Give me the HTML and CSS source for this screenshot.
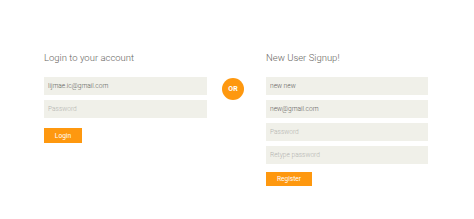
FILE: index.html
```html
<!DOCTYPE html>
<html lang="en">
<head>
  <meta charset="UTF-8">
  <meta name="viewport" content="width=device-width, initial-scale=1.0">
  <title>Login</title>
  <link rel="stylesheet" href="styles.css">
</head>
<body>
  <div class="form-section">
    <!-- Login form -->
    <div class="login-form">
      <h2>Login to your account</h2>
      <input type="text" value="lijmae.ic@gmail.com">
      <input type="password" placeholder="Password">
      <button class="btn-login">Login</button>
    </div>

    <div class="or">OR</div>

    <!-- Signup form -->
    <div class="signup-form">
      <h2>New User Signup!</h2>
      <input type="text" value="new new">
      <input type="text" value="new@gmail.com">
      <input type="password" placeholder="Password">
      <input type="password" placeholder="Retype password">
      <button class="btn-register">Register</button>
    </div>
  </div>
</body>
</html>
```

FILE: styles.css
```css
body {
  font-family: Roboto, "Liberation Sans", sans-serif;
  background-color: #fff;
  margin: 0;
  padding: 0;
}
.form-section {
  display: flex;
  align-items: flex-start;
  padding: 52px 0 0 44px;
}
.login-form, .signup-form {
  display: flex;
  flex-direction: column;
  align-items: flex-start;
  width: 163px;
}
.signup-form {
  width: 162px;
}
h2 {
  margin: 0 0 13px;
  font-size: 9.5px;
  line-height: 12px;
  font-weight: 300;
  color: #696763;
}
input {
  box-sizing: border-box;
  width: 100%;
  height: 18px;
  margin: 0 0 5px;
  padding: 0 4px;
  border: none;
  background: #f0f0e9;
  font-family: inherit;
  font-size: 6.6px;
  font-weight: 300;
  color: #5e5d5a;
  outline: none;
}
input::placeholder {
  color: #b3b3b0;
}
button {
  margin-top: 5px;
  height: 15px;
  padding: 0;
  border: none;
  background: #fe980f;
  color: #fff;
  font-family: inherit;
  font-size: 6.6px;
  cursor: pointer;
}
.btn-login {
  width: 38px;
}
.btn-register {
  margin-top: 3px;
  width: 46px;
  height: 14px;
}
.or {
  margin: 26px 22px 0 15px;
  width: 22px;
  height: 22px;
  border-radius: 50%;
  background: #fe980f;
  color: #fff;
  font-size: 7px;
  font-weight: 700;
  line-height: 22px;
  text-align: center;
}
```
